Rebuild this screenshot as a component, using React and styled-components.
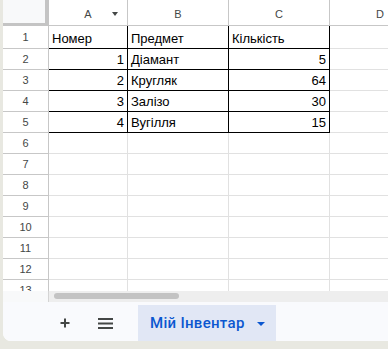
import React from "react";
import styled, { createGlobalStyle } from "styled-components";

const Global = createGlobalStyle`
  html, body { margin: 0; padding: 0; }
  body {
    background: #e8e8e1;
    width: 388px;
    height: 349px;
    overflow: hidden;
    font-family: "Liberation Sans", Arial, sans-serif;
  }
`;

const Card = styled.div`
  margin-left: 3px;
  width: 385px;
  height: 341px;
  background: #ffffff;
  border-bottom-left-radius: 8px;
  overflow: hidden;
  display: flex;
  flex-direction: column;
`;

const Sheet = styled.div`
  height: 291px;
  overflow: hidden;
  display: grid;
  grid-template-columns: 46px 79px 101px 101px 101px;
  grid-template-rows: 26px 23px repeat(12, 21px);
  width: 428px;
`;

const Corner = styled.div`
  background: #f8f9fa;
  border-right: 4px solid #c4c4c4;
  border-bottom: 3px solid #c4c4c4;
`;

const ColHead = styled.div`
  position: relative;
  display: flex;
  align-items: center;
  justify-content: center;
  padding-top: 2px;
  box-sizing: border-box;
  border-right: 1px solid #c7c7c7;
  border-bottom: 1px solid #c7c7c7;
  font-size: 11px;
  color: #444746;
`;

const HeadCaret = styled.span`
  position: absolute;
  right: 9px;
  top: 12px;
  width: 0;
  height: 0;
  border-left: 3.5px solid transparent;
  border-right: 3.5px solid transparent;
  border-top: 4px solid #444746;
`;

const RowHead = styled.div`
  display: flex;
  align-items: center;
  justify-content: center;
  box-sizing: border-box;
  border-right: 1px solid #c7c7c7;
  border-bottom: 1px solid #c7c7c7;
  font-size: 11px;
  color: #444746;
`;

const Cell = styled.div`
  display: flex;
  align-items: flex-end;
  justify-content: ${(p) => (p.$num ? "flex-end" : "flex-start")};
  box-sizing: border-box;
  padding: 0 3px 1px 3px;
  border-right: 1px solid ${(p) => (p.$bordered ? "#000000" : "#e1e1e1")};
  border-bottom: 1px solid ${(p) => (p.$bordered ? "#000000" : "#e1e1e1")};
  font-size: 13px;
  line-height: 16px;
  color: #000000;
  white-space: nowrap;
  overflow: hidden;
`;

const ScrollRow = styled.div`
  height: 11px;
  display: flex;
  flex-shrink: 0;
`;

const ScrollLeft = styled.div`
  width: 46px;
  box-sizing: border-box;
  background: #f8f9fa;
  border-right: 1px solid #d4d4d4;
`;

const ScrollTrack = styled.div`
  flex: 1;
  background: #eeeeee;
  padding: 2px 5px;
  display: flex;
  align-items: flex-start;
`;

const Thumb = styled.div`
  width: 125px;
  height: 6px;
  border-radius: 3px;
  background: #c3c3c3;
`;

const TabBar = styled.div`
  flex: 1;
  background: #f9fafd;
  display: flex;
  align-items: flex-end;
  padding-left: 56px;
`;

const IconBtn = styled.button`
  border: none;
  background: transparent;
  padding: 0;
  width: ${(p) => p.$w}px;
  height: 36px;
  display: flex;
  align-items: center;
  justify-content: center;
  margin-right: ${(p) => p.$mr}px;
  color: #444746;
`;

const Tab = styled.div`
  width: 138px;
  height: 36px;
  box-sizing: border-box;
  background: #e1e7f5;
  display: flex;
  align-items: center;
  padding-left: 12px;
  gap: 12px;
  font-family: Roboto, "Liberation Sans", sans-serif;
  font-weight: 500;
  font-size: 15px;
  letter-spacing: 0.3px;
  color: #0b57d0;
  white-space: nowrap;
`;

const TabCaret = styled.span`
  width: 0;
  height: 0;
  border-left: 4px solid transparent;
  border-right: 4px solid transparent;
  border-top: 4px solid #0b57d0;
  margin-top: 1px;
`;

const cols = ["A", "B", "C", "D"];
const data = [
  ["Номер", "Предмет", "Кількість"],
  [1, "Діамант", 5],
  [2, "Кругляк", 64],
  [3, "Залізо", 30],
  [4, "Вугілля", 15],
];

export default function App() {
  const rows = [];
  for (let r = 1; r <= 13; r++) {
    rows.push(<RowHead key={`h${r}`}>{r}</RowHead>);
    for (let c = 0; c < 4; c++) {
      const v = data[r - 1] && c < 3 ? data[r - 1][c] : "";
      const bordered = r <= 5 && c < 3;
      rows.push(
        <Cell key={`${r}-${c}`} $num={typeof v === "number"} $bordered={bordered}>
          {v}
        </Cell>
      );
    }
  }
  return (
    <>
      <Global />
      <Card>
        <Sheet>
          <Corner />
          {cols.map((c) => (
            <ColHead key={c}>
              {c}
              {c === "A" && <HeadCaret />}
            </ColHead>
          ))}
          {rows}
        </Sheet>
        <ScrollRow>
          <ScrollLeft />
          <ScrollTrack>
            <Thumb />
          </ScrollTrack>
        </ScrollRow>
        <TabBar>
          <IconBtn $w={12} $mr={27} aria-label="Add sheet">
            <svg width="12" height="12" viewBox="0 0 12 12">
              <path d="M6 1.5v9M1.5 6h9" stroke="#444746" strokeWidth="2" />
            </svg>
          </IconBtn>
          <IconBtn $w={15} $mr={25} aria-label="All sheets">
            <svg width="15" height="11" viewBox="0 0 15 11">
              <path d="M0 1h15M0 5.5h15M0 10h15" stroke="#444746" strokeWidth="2" />
            </svg>
          </IconBtn>
          <Tab>
            Мій Інвентар
            <TabCaret />
          </Tab>
        </TabBar>
      </Card>
    </>
  );
}
